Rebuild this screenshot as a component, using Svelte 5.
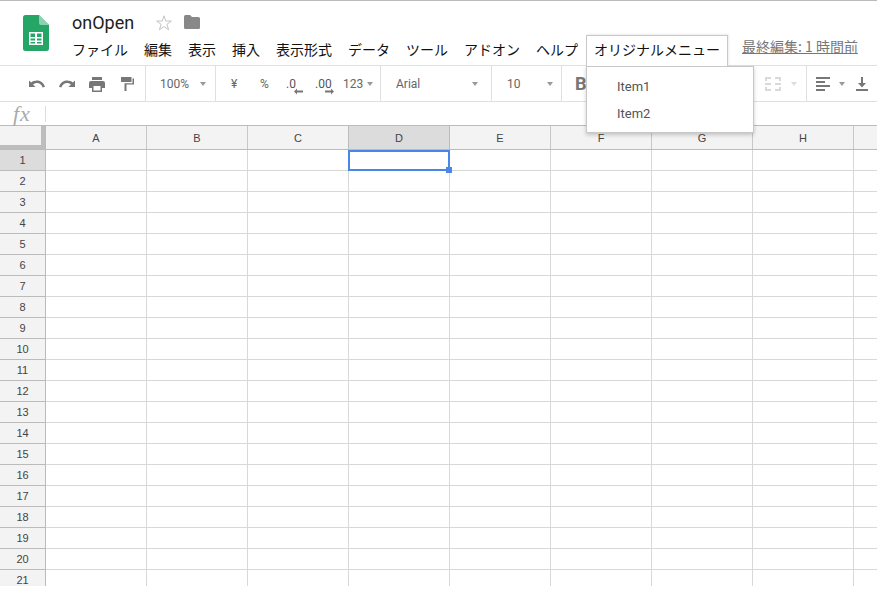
<script>
  const menus = ['ファイル', '編集', '表示', '挿入', '表示形式', 'データ', 'ツール', 'アドオン', 'ヘルプ'];
  const cols = ['A', 'B', 'C', 'D', 'E', 'F', 'G', 'H', ''];
  const rows = Array.from({ length: 21 }, (_, i) => i + 1);
</script>

<div class="page">
  <header class="head">
    <svg class="logo" width="26" height="36" viewBox="0 0 26 36">
      <path d="M2.500 0H16L26 10V33.500A2.500 2.500 0 0 1 23.500 36H2.500A2.500 2.500 0 0 1 0 33.500V2.500A2.500 2.500 0 0 1 2.500 0Z" fill="#25a667"/>
      <path d="M16 0L26 10H18A2 2 0 0 1 16 8Z" fill="#8ed1b1"/>
      <path d="M6 17H20V30H6ZM7.500 18.500V22H12V18.500ZM14 18.500V22H18.500V18.500ZM7.500 23.500V25.500H12V23.500ZM14 23.500V25.500H18.500V23.500ZM7.500 27V28.500H12V27ZM14 27V28.500H18.500V27Z" fill="#fff" fill-rule="evenodd"/>
    </svg>
    <div class="titles">
      <div class="titlerow">
        <span class="title">onOpen</span>
        <svg class="star" width="18" height="18" viewBox="0 0 18 18"><path d="M9 1.800 10.800 7H16.400L11.900 10.300 13.600 15.800 9 12.500 4.400 15.800 6.100 10.300 1.600 7H7.200Z" fill="none" stroke="#c4c4c4" stroke-width="1"/></svg>
        <svg class="folder" width="16" height="14" viewBox="0 0 16 14"><path d="M0 1.500A1.500 1.500 0 0 1 1.500 0H6L8 2H14.500A1.500 1.500 0 0 1 16 3.500V12.500A1.500 1.500 0 0 1 14.500 14H1.500A1.500 1.500 0 0 1 0 12.500Z" fill="#888"/></svg>
      </div>
      <nav class="menubar">
        {#each menus as m}<span class="menu">{m}</span>{/each}
        <span class="menu custom">オリジナルメニュー</span>
        <span class="edited">最終編集: 1 時間前</span>
      </nav>
    </div>
  </header>

  <div class="toolbar">
    <div class="seg seg1">
      <svg width="16" height="8" viewBox="0 0 16 8"><path d="M8 0.500C5.700 0.500 3.700 1.200 2.200 2.400L0 .5V7H6.500L4 4.500C5.100 3.600 6.500 3 8 3 10.500 3 12.700 4.600 13.600 7.500L16 6.800C14.900 3 11.800 0.500 8 0.500Z" fill="#777"/></svg>
      <svg width="16" height="8" viewBox="0 0 16 8"><path d="M8 0.500C10.300 0.500 12.300 1.200 13.800 2.400L16 .5V7H9.500L12 4.500C10.900 3.600 9.500 3 8 3 5.500 3 3.300 4.600 2.400 7.500L0 6.800C1.100 3 4.200 0.500 8 0.500Z" fill="#777"/></svg>
      <svg width="16" height="15" viewBox="0 0 16 15"><path d="M3 0H13V3H3ZM2 4H14A2 2 0 0 1 16 6V11H13V15H3V11H0V6A2 2 0 0 1 2 4ZM4.500 9V13.500H11.500V9Z" fill="#777" fill-rule="evenodd"/></svg>
      <svg width="13" height="14" viewBox="0 0 13 14"><path d="M0 0H10.500V5H0ZM11.500 1.500H13V7.500H5.500V14H3.500V6.200H11.500Z" fill="#777"/></svg>
    </div>
    <div class="seg seg2"><span class="tt">100%</span><i class="caret"></i></div>
    <div class="seg seg3">
      <span class="sym yen">¥</span>
      <span class="sym pct">%</span>
      <span class="dec d1">.0<svg width="9" height="7" viewBox="0 0 9 7"><path d="M9 2.600V4.400H3V6.500L0 3.500 3 .5V2.600Z" fill="#777"/></svg></span>
      <span class="dec d2">.00<svg width="9" height="7" viewBox="0 0 9 7"><path d="M0 2.600V4.400H6V6.500L9 3.500 6 .5V2.600Z" fill="#777"/></svg></span>
      <span class="tt num">123</span><i class="caret"></i>
    </div>
    <div class="seg seg4"><span class="tt">Arial</span><i class="caret"></i></div>
    <div class="seg seg5"><span class="tt">10</span><i class="caret"></i></div>
    <div class="seg seg6"><span class="bold">B</span></div>
    <div class="seg seg7">
      <svg width="16" height="14" viewBox="0 0 16 14"><path d="M0 0H6V2H2V4H0ZM10 0H16V4H14V2H10ZM0 10H2V12H6V14H0ZM14 10H16V14H10V12H14ZM0 6H6V8H0ZM10 6H16V8H10Z" fill="#d9d9d9"/></svg>
      <i class="caret light"></i>
    </div>
    <div class="seg seg8">
      <svg width="14" height="14" viewBox="0 0 14 14"><path d="M0 0H14V2H0ZM0 4H9V6H0ZM0 8H14V10H0ZM0 12H9V14H0Z" fill="#777"/></svg>
      <i class="caret"></i>
      <svg class="valign" width="12" height="14" viewBox="0 0 12 14"><path d="M5 0H7V6H10L6 10.500 2 6H5ZM0 12H12V14H0Z" fill="#777"/></svg>
    </div>
  </div>

  <div class="formula">
    <span class="fx">fx</span>
    <span class="fxsep"></span>
  </div>

  <div class="sheet">
    <div class="colhead">
      <div class="corner"></div>
      {#each cols as c}<div class="ch" class:sel={c === 'D'}>{c}</div>{/each}
    </div>
    {#each rows as r}
      <div class="row">
        <div class="rh" class:sel={r === 1}>{r}</div>
        {#each cols as c}
          <div class="cell">
            {#if r === 1 && c === 'D'}<div class="active"><i class="handle"></i></div>{/if}
          </div>
        {/each}
      </div>
    {/each}
  </div>

  <div class="dropdown">
    <div class="item">Item1</div>
    <div class="item">Item2</div>
  </div>
</div>

<style>
  :global(body) { margin: 0; background: #fff; overflow: hidden; }
  .page {
    position: relative; width: 877px; height: 590px; overflow: hidden;
    font-family: Roboto, "Noto Sans CJK JP", sans-serif; color: #333; background: #fff;
  }
  .head { height: 64px; border-top: 1px solid #bbb; border-bottom: 1px solid #e0e0e0; display: flex; }
  .logo { margin: 14px 0 0 23px; flex: none; }
  .titles { margin-left: 15px; display: flex; flex-direction: column; flex: 1; }
  .titlerow { display: flex; align-items: center; height: 22px; margin: 11px 0 0 8px; }
  .title { font-size: 18px; color: #222; width: 76px; }
  .star { margin-left: 7px; }
  .folder { margin-left: 11px; margin-top: -1px; }
  .menubar { display: flex; align-items: flex-start; height: 30px; margin-top: 2px; font-family: "Noto Sans CJK JP", sans-serif; font-size: 14px; color: #111; }
  .menu { padding: 0 8px; line-height: 28px; white-space: nowrap; }
  .custom {
    position: relative; z-index: 3; padding: 0 7px; margin-right: 14px;
    height: 31px; width: 142px; box-sizing: border-box; background: #fff;
    border: 1px solid #c8c8c8; border-bottom: none; line-height: 26px;
    box-shadow: 1px -1px 2px rgba(0, 0, 0, .08);
  }
  .edited { font-size: 14px; line-height: 22px; color: #777; text-decoration: underline; white-space: nowrap; }

  .toolbar { height: 35px; border-bottom: 1px solid #e0e0e0; display: flex; font-size: 12px; color: #666; position: relative; }
  .seg { box-sizing: border-box; display: flex; align-items: center; border-right: 1px solid #e0e0e0; height: 35px; flex: none; }
  .seg1 { width: 146px; padding-left: 29px; gap: 14px; }
  .seg1 svg:nth-child(3) { margin-top: 1px; }
  .seg1 svg:nth-child(4) { margin-left: 2px; margin-top: 1px; }
  .seg2 { width: 70px; padding-left: 14px; }
  .seg2 .caret { margin-left: 11px; }
  .seg3 { width: 165px; padding-left: 15px; }
  .sym { font-size: 12px; }
  .yen { width: 29px; }
  .pct { width: 26px; }
  .dec { position: relative; font-size: 12px; color: #555; }
  .d1 { width: 29px; }
  .d2 { width: 28px; }
  .dec svg { position: absolute; top: 11px; }
  .d1 svg { left: 8px; }
  .d2 svg { left: 10px; }
  .seg3 .caret { margin-left: 4px; }
  .seg4 { width: 111px; padding-left: 15px; }
  .seg4 .caret { margin-left: 52px; }
  .seg5 { width: 70px; padding-left: 15px; }
  .seg5 .caret { margin-left: 26px; }
  .seg6 { width: 245px; padding-left: 13px; }
  .bold { font-size: 18px; font-weight: 700; color: #777; }
  /* The menu hides the stretch between B and the merge button, so these two overlap seg6. */
  .seg7 { position: absolute; left: 764px; top: 0; width: 43px; padding-left: 1px; }
  .seg7 .caret { margin-left: 10px; }
  .seg8 { position: absolute; left: 816px; top: 0; border: none; }
  .seg8 .caret { margin-left: 9px; }
  .valign { margin-left: 11px; }
  .caret { width: 0; height: 0; border: 3.500px solid transparent; border-top: 4px solid #999; border-bottom: none; display: block; flex: none; }
  .caret.light { border-top-color: #ddd; }
  .formula { height: 23px; display: flex; align-items: center; }
  .fx { font-family: "Liberation Serif", serif; font-style: italic; font-size: 22px; letter-spacing: 1px; color: #aaa; margin-left: 13px; width: 32px; }
  .fxsep { width: 1px; height: 16px; background: #ddd; }

  .sheet { height: 461px; overflow: hidden; font-family: "Liberation Sans", Arial, sans-serif; font-size: 11px; color: #444; }
  .colhead { display: flex; height: 25px; border-top: 1px solid #bbb; border-bottom: 1px solid #bbb; background: #f3f3f3; box-sizing: border-box; }
  .corner { width: 46px; box-sizing: border-box; border-right: 1px solid #bbb; flex: none; position: relative; }
  .corner::after { content: ""; position: absolute; right: 0; top: 0; bottom: 0; width: 4px; background: #bdbdbd; }
  .corner::before { content: ""; position: absolute; left: 0; right: 0; bottom: 0; height: 4px; background: #bdbdbd; }
  .ch {
    width: 101px; flex: none; box-sizing: border-box; border-right: 1px solid #c8c8c8;
    display: flex; align-items: center; justify-content: center;
  }
  .ch.sel { background: #dcdcdc; border-left: 1px solid #bbb; margin-left: -1px; width: 102px; border-right-color: #bbb; }
  .row { display: flex; height: 21px; }
  .rh {
    width: 46px; flex: none; box-sizing: border-box; background: #f3f3f3;
    border-right: 1px solid #bbb; border-bottom: 1px solid #bbb;
    display: flex; align-items: center; justify-content: center;
  }
  .rh.sel { background: #dcdcdc; }
  .cell { width: 101px; flex: none; box-sizing: border-box; border-right: 1px solid #d8d8d8; border-bottom: 1px solid #d8d8d8; position: relative; }
  .active { position: absolute; z-index: 1; left: -1px; top: 0; width: 102px; height: 21px; box-sizing: border-box; border: 2px solid #4a86e8; }
  .handle { position: absolute; right: -4px; bottom: -4px; width: 6px; height: 6px; background: #4a86e8; display: block; }

  .dropdown {
    position: absolute; z-index: 2; left: 586px; top: 66px; width: 168px; height: 67px; box-sizing: border-box;
    background: #fff; border: 1px solid #c8c8c8; box-shadow: 0 2px 4px rgba(0,0,0,.2); padding: 6px 0 0 0;
    font-size: 13px; color: #555;
  }
  .item { height: 27px; line-height: 27px; padding-left: 30px; }
</style>
